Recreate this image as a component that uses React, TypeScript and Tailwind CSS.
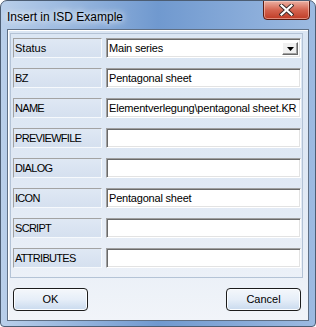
import React from "react";

const rows: { label: string; value: string; select?: boolean }[] = [
  { label: "Status", value: "Main series", select: true },
  { label: "BZ", value: "Pentagonal sheet" },
  { label: "NAME", value: "Elementverlegung\\pentagonal sheet.KR" },
  { label: "PREVIEWFILE", value: "" },
  { label: "DIALOG", value: "" },
  { label: "ICON", value: "Pentagonal sheet" },
  { label: "SCRIPT", value: "" },
  { label: "ATTRIBUTES", value: "" },
];

const sans = { fontFamily: '"Liberation Sans", Arial, sans-serif' };

const Row = ({ label, value, select }: { label: string; value: string; select?: boolean }) => {
  const caps = label === label.toUpperCase();
  return (
    <div className="flex items-center h-[20px]">
      <div
        className={
          "w-[89px] h-[20px] flex items-center pl-[1px] border border-t-[#a3a3a3] border-l-[#a3a3a3] border-r-[#f6f9fc] border-b-[#f6f9fc] bg-gradient-to-b from-[#dfe8f4] to-[#d5e0ef] text-[11px] text-black " +
          (caps ? "tracking-[-0.7px]" : "")
        }
      >
        {label}
      </div>
      <div className="ml-[4px] w-[195px] h-[20px] relative flex items-center overflow-hidden bg-white border border-t-[#a0a0a0] border-l-[#a0a0a0] border-r-[#ffffff] border-b-[#ffffff] shadow-[inset_1px_1px_0_#6a6a6a,inset_-1px_-1px_0_#e3e3e3]">
        <span className="pl-[2px] text-[11px] tracking-[-0.2px] text-black whitespace-nowrap">{value}</span>
        {select && (
          <div className="absolute right-[2px] top-[3px] w-[16px] h-[13px] flex items-center justify-center bg-[#f0f0f0] border border-t-[#ffffff] border-l-[#ffffff] border-r-[#696969] border-b-[#696969] shadow-[inset_-1px_-1px_0_#a0a0a0]">
            <svg width="7" height="4" viewBox="0 0 7 4">
              <path d="M0 0 H7 L3.5 4 Z" fill="#000" />
            </svg>
          </div>
        )}
      </div>
    </div>
  );
};

const Button = ({ text }: { text: string }) => (
  <div className="w-[75px] h-[23px] rounded-[4px] border border-[#1c1c1c] bg-gradient-to-b from-[#f4f7fb] via-[#e6eef8] to-[#c9daee] shadow-[inset_0_0_0_1px_#fbfdff] flex items-center justify-center text-[11px] text-black">
    {text}
  </div>
);

export default function App() {
  return (
    <div
      className="w-[316px] h-[327px] flex flex-col rounded-t-[7px] rounded-b-[4px] border border-[#4c5d73] bg-gradient-to-r from-[#b9cfea] via-[#7099cf] to-[#9cbae1] overflow-hidden"
      style={sans}
    >
      <div className="h-[28px] flex justify-between items-start shrink-0">
        <div className="pl-[6px] pt-[7px] text-[12px] text-black [text-shadow:0_0_6px_#ffffff,0_0_10px_#ffffff]">
          Insert in ISD Example
        </div>
        <div className="mr-[5px] -mt-[1px] w-[47px] h-[20px] rounded-b-[4px] border border-[#5b1c12] bg-gradient-to-b from-[#eab0a3] via-[#d4634f] to-[#bf3a24] shadow-[inset_0_0_0_1px_rgba(255,220,210,0.5)] flex items-center justify-center">
          <svg width="15" height="12" viewBox="0 0 15 12">
            <path d="M2.5 1.5 L12.5 10.5 M12.5 1.5 L2.5 10.5" stroke="#3b2a28" strokeWidth="4" strokeLinecap="square" />
            <path d="M2.5 1.5 L12.5 10.5 M12.5 1.5 L2.5 10.5" stroke="#ffffff" strokeWidth="2.2" strokeLinecap="square" />
          </svg>
        </div>
      </div>
      <div className="mx-[6px] mb-[5px] flex-1 border border-[#5f6f84] bg-gradient-to-b from-[#dbe6f3] via-[#dfe8f4] to-[#f1f4f9] shadow-[inset_1px_1px_0_#ffffff] flex flex-col">
        <div className="mt-[3px] ml-[2px] mr-[5px] h-[245px] border border-[#b4c3d6] pt-[4px] pl-[2px] flex flex-col gap-[10px]">
          {rows.map((r) => (
            <Row key={r.label} {...r} />
          ))}
        </div>
        <div className="mt-[10px] ml-[5px] mr-[7px] flex justify-between">
          <Button text="OK" />
          <Button text="Cancel" />
        </div>
      </div>
    </div>
  );
}
